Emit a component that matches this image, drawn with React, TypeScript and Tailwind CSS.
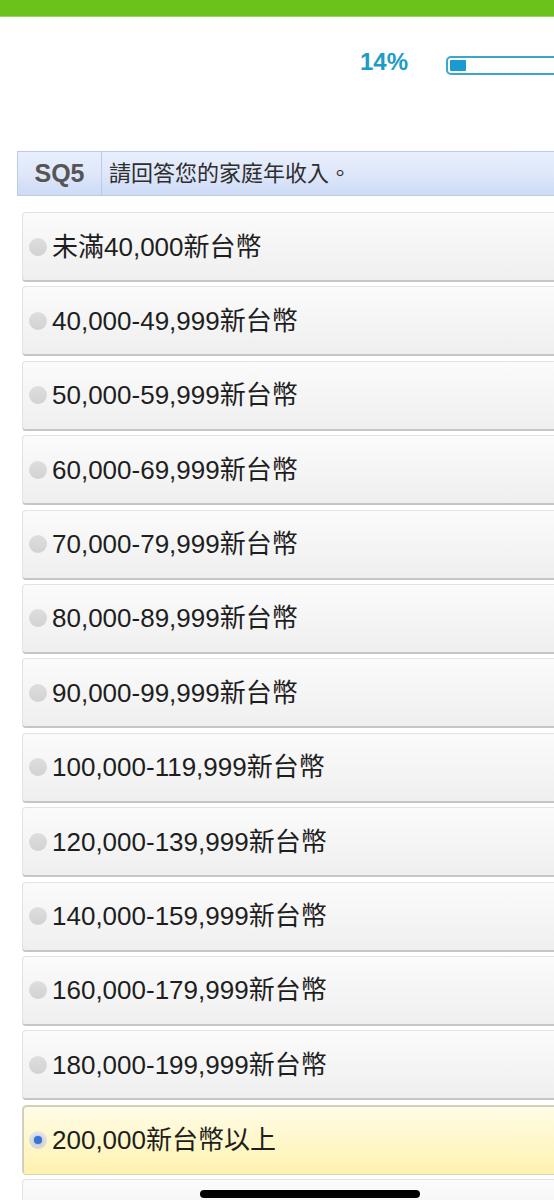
import React from "react";

const options = [
  "未滿40,000新台幣",
  "40,000-49,999新台幣",
  "50,000-59,999新台幣",
  "60,000-69,999新台幣",
  "70,000-79,999新台幣",
  "80,000-89,999新台幣",
  "90,000-99,999新台幣",
  "100,000-119,999新台幣",
  "120,000-139,999新台幣",
  "140,000-159,999新台幣",
  "160,000-179,999新台幣",
  "180,000-199,999新台幣",
  "200,000新台幣以上",
  "",
];

const font = { fontFamily: '"Liberation Sans", "Noto Sans CJK TC", sans-serif' };

export default function App() {
  return (
    <div className="relative w-[554px] h-[1200px] overflow-hidden bg-white" style={font}>
      <div className="h-[17px] bg-[#6bc21b] border-b border-[#9ad65e]" />
      <div className="flex items-center h-[26px] mt-[35px] pl-[360px]">
        <span className="text-[24px] font-bold text-[#1d9cc8] leading-none w-[86px] shrink-0 mb-[6px]">14%</span>
        <div className="w-[140px] h-[19px] rounded-[5px] border-2 border-[#3aa8cc] bg-white flex items-center pl-[2px] shrink-0">
          <div className="w-[16px] h-[11px] bg-[#1a9ad0] rounded-[1px]" />
        </div>
      </div>
      <div className="ml-[17px] mt-[73px] w-[560px] h-[45px] flex border border-[#bccbe8] bg-gradient-to-b from-[#e8eefc] via-[#dfe7fa] to-[#cddbf6]">
        <div className="w-[84px] shrink-0 border-r border-[#bccbe8] flex items-center justify-center text-[25px] font-bold text-[#555]">
          SQ5
        </div>
        <div className="flex items-center pl-[7px] text-[22px] text-[#2e2e2e]">請回答您的家庭年收入。</div>
      </div>
      <div className="ml-[22px] mt-[16px] w-[560px] flex flex-col gap-[4.4px]">
        {options.map((o, i) => {
          const sel = i === 12;
          return (
            <div
              key={i}
              className={
                "h-[70px] rounded-[4px] border flex items-center shrink-0 " +
                (sel
                  ? "border-[#d8d3b0] bg-gradient-to-b from-[#fffce6] to-[#fff2b0] shadow-[inset_1px_1px_0_#ccc]"
                  : "border-[#e2e2e2] border-b-[#c6c6c6] border-b-2 bg-gradient-to-b from-[#fbfbfb] to-[#efefef]")
              }
            >
              {o && (
                <>
                  <div
                    className={
                      "ml-[6px] w-[18px] h-[18px] shrink-0 rounded-full flex items-center justify-center " +
                      (sel
                        ? "bg-gradient-to-b from-[#e6e6e6] to-[#d4d4d4]"
                        : "bg-gradient-to-b from-[#dedede] to-[#d2d2d2]")
                    }
                  >
                    {sel && <div className="w-[8px] h-[8px] rounded-full bg-[#3a72d8] shadow-[0_0_2px_#6a9be8]" />}
                  </div>
                  <span className="ml-[5px] text-[26px] text-[#1e1e1e] leading-none">{o}</span>
                </>
              )}
            </div>
          );
        })}
      </div>
      <div className="absolute left-[200px] top-[1190px] w-[220px] h-[8px] rounded-full bg-black" />
    </div>
  );
}
